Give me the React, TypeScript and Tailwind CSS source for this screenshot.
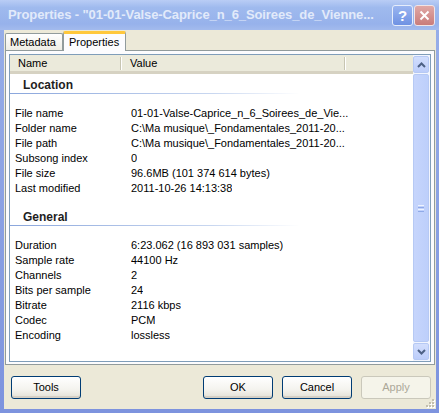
import { ReactNode } from "react";

const location = [
  ["File name", "01-01-Valse-Caprice_n_6_Soirees_de_Vie..."],
  ["Folder name", "C:\\Ma musique\\_Fondamentales_2011-20..."],
  ["File path", "C:\\Ma musique\\_Fondamentales_2011-20..."],
  ["Subsong index", "0"],
  ["File size", "96.6MB (101 374 614 bytes)"],
  ["Last modified", "2011-10-26 14:13:38"],
];

const general = [
  ["Duration", "6:23.062 (16 893 031 samples)"],
  ["Sample rate", "44100 Hz"],
  ["Channels", "2"],
  ["Bits per sample", "24"],
  ["Bitrate", "2116 kbps"],
  ["Codec", "PCM"],
  ["Encoding", "lossless"],
];

function Group({ title, rows, top }: { title: string; rows: string[][]; top: string }) {
  return (
    <div className={top}>
      <div className="h-[15px] pl-[13px] font-bold text-[12px] leading-[15px] text-[#1e1e1e]">{title}</div>
      <div className="h-px w-[290px] bg-[linear-gradient(to_right,#8aa6dc,#c9d7f0_70%,#ffffff)]" />
      <div className="mt-[12px]">
        {rows.map(([k, v]) => (
          <div key={k} className="flex h-[15px] leading-[15px] whitespace-nowrap">
            <span className="w-[121px] pl-[5px] shrink-0">{k}</span>
            <span className="overflow-hidden">{v}</span>
          </div>
        ))}
      </div>
    </div>
  );
}

function Button({ children, disabled }: { children: ReactNode; disabled?: boolean }) {
  return (
    <button
      className={
        disabled
          ? "w-[70px] h-[23px] rounded-[3px] border border-[#cac8bb] bg-[#f5f4ea] text-[#aca899]"
          : "w-[70px] h-[23px] rounded-[3px] border border-[#003c74] bg-[linear-gradient(to_bottom,#ffffff,#f4f3ee_60%,#e3e0d5)] text-black shadow-[inset_0_-2px_0_#d6d0c5]"
      }
    >
      {children}
    </button>
  );
}

function ScrollArrow({ up }: { up?: boolean }) {
  return (
    <div className="w-[16px] h-[17px] rounded-[2px] border border-[#b6c9f4] bg-[linear-gradient(to_bottom,#d2defd,#bccdfa)] flex items-center justify-center">
      <svg width="9" height="6" viewBox="0 0 9 6">
        <path
          d={up ? "M1 5 L4.5 1.5 L8 5" : "M1 1 L4.5 4.5 L8 1"}
          fill="none"
          stroke="#4d6185"
          strokeWidth="2"
        />
      </svg>
    </div>
  );
}

function HeaderSep() {
  return <div className="w-[2px] h-[13px] self-center border-l border-[#c7c5b2] border-r border-r-white" />;
}

export default function App() {
  return (
    <div className="w-[439px] h-[413px] flex flex-col bg-[#8fa6e4] font-['Liberation_Sans',Arial,sans-serif] text-[11px] text-black">
      {/* title bar */}
      <div className="h-[30px] flex items-center pl-[8px] pr-[4px] bg-[linear-gradient(to_bottom,#b9cdf5,#9fbaee_25%,#97b2eb_80%,#a3bbed)]">
        <span className="flex-1 font-bold text-[13px] text-[#e2eafa] whitespace-nowrap tracking-[-0.1px]">
          Properties - "01-01-Valse-Caprice_n_6_Soirees_de_Vienne...
        </span>
        <div className="flex gap-[1px] pt-[1px]">
          <div className="w-[21px] h-[21px] rounded-[3px] border border-[#e6edfb] bg-[linear-gradient(to_bottom,#9ab5f0,#6f92e3)] flex items-center justify-center text-white font-bold text-[15px] leading-none">
            ?
          </div>
          <div className="w-[21px] h-[21px] rounded-[3px] border border-[#f0e4e6] bg-[linear-gradient(to_bottom,#e0a8a6,#c97c7a)] flex items-center justify-center">
            <svg width="11" height="11" viewBox="0 0 11 11">
              <path d="M1.5 1.5 L9.5 9.5 M9.5 1.5 L1.5 9.5" stroke="#ffffff" strokeWidth="2" />
            </svg>
          </div>
        </div>
      </div>

      <div className="flex-1 flex pl-[4px] pr-[3px] pb-[4px] bg-[linear-gradient(to_bottom,#96ade8,#7d93de)]">
        <div className="flex-1 flex flex-col bg-[#ece9d8]">
          {/* tabs */}
          <div className="h-[20px] flex items-end pl-[1px]">
            <div className="h-[17px] w-[58px] border border-b-0 border-[#919b9c] rounded-t-[2px] bg-[linear-gradient(to_bottom,#ffffff,#eeede5)] pl-[4px] leading-[16px]">
              Metadata
            </div>
            <div className="h-[20px] w-[63px] -mb-px relative z-10 border-x border-[#919b9c] rounded-t-[2px] bg-[#fcfcfe] border-t-[3px] border-t-[#ffc83c] pl-[5px] leading-[16px]">
              Properties
            </div>
          </div>

          {/* panel */}
          <div className="h-[315px] mx-[1px] border border-[#919b9c] bg-[#fcfcfe] p-[3px] pb-[2px]">
            <div className="h-full border border-[#7f9db9] bg-white flex">
              <div className="flex-1 flex flex-col">
                {/* header */}
                <div className="h-[19px] flex bg-[#ebeadb] border-b-[3px] border-[#d6d2c2] text-black">
                  <div className="w-[110px] flex items-center pl-[8px]">Name</div>
                  <HeaderSep />
                  <div className="w-[222px] flex items-center pl-[8px]">Value</div>
                  <HeaderSep />
                </div>
                <Group title="Location" rows={location} top="mt-[4px]" />
                <Group title="General" rows={general} top="mt-[14px]" />
              </div>
              {/* scrollbar */}
              <div className="w-[17px] flex flex-col pt-[1px] pb-[1px] bg-[#f2f5fe]">
                <ScrollArrow up />
                <div className="flex-1 my-[1px] w-[16px] rounded-[2px] border border-[#b6c9f4] bg-[linear-gradient(to_right,#c6d5fc,#bdcffb)] flex items-center justify-center">
                  <div className="flex flex-col gap-[1px]">
                    <div className="w-[6px] h-px bg-[#eef3fe]" />
                    <div className="w-[6px] h-px bg-[#8faae8]" />
                    <div className="w-[6px] h-px bg-[#eef3fe]" />
                    <div className="w-[6px] h-px bg-[#8faae8]" />
                  </div>
                </div>
                <ScrollArrow />
              </div>
            </div>
          </div>

          {/* buttons */}
          <div className="flex items-start pt-[11px] pl-[7px] relative flex-1">
            <Button>Tools</Button>
            <div className="ml-auto flex gap-[9px] pr-[5px]">
              <Button>OK</Button>
              <Button>Cancel</Button>
              <Button disabled>Apply</Button>
            </div>
            <svg className="absolute right-[1px] bottom-[1px]" width="10" height="10" viewBox="0 0 10 10">
              {[
                [8, 2], [8, 5], [5, 5], [8, 8], [5, 8], [2, 8],
              ].map(([x, y]) => (
                <g key={`${x}-${y}`}>
                  <rect x={x} y={y} width="2" height="2" fill="#ffffff" />
                  <rect x={x - 1} y={y - 1} width="2" height="2" fill="#c3bfae" />
                </g>
              ))}
            </svg>
          </div>
        </div>
      </div>
    </div>
  );
}
